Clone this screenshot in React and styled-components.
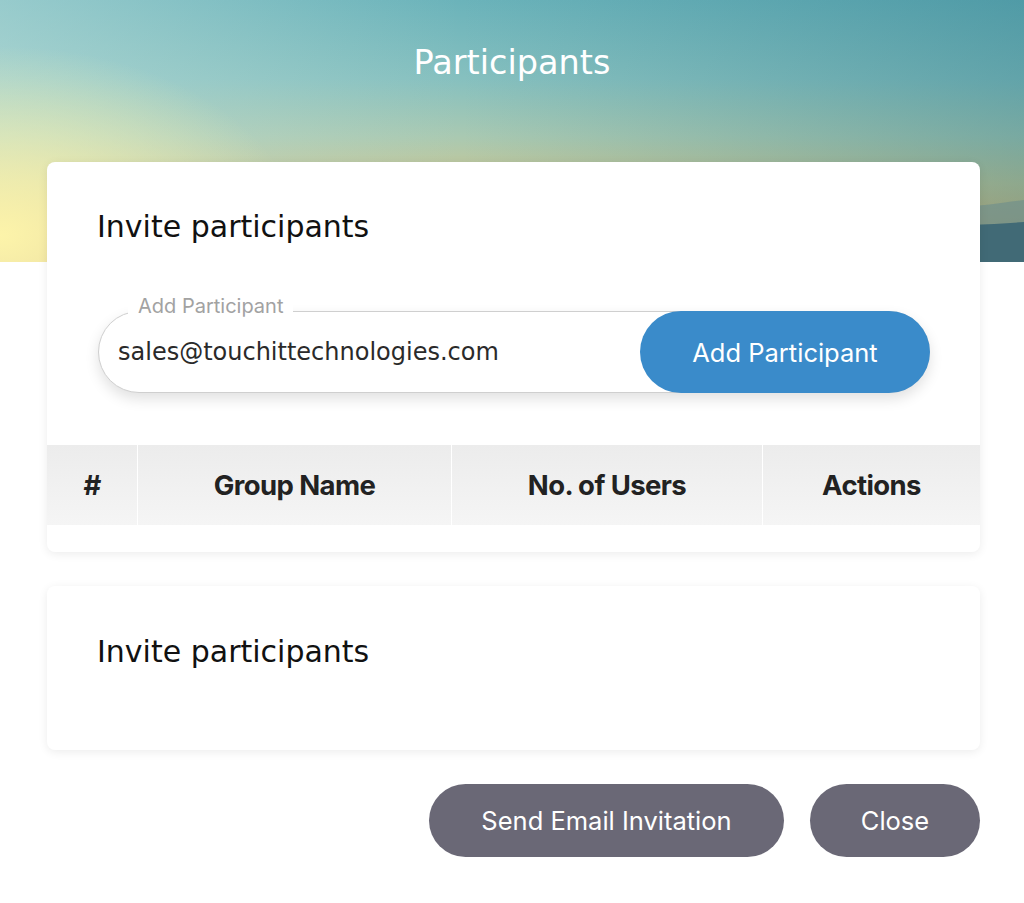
import React, { useEffect, useRef, useState } from 'react';
import styled, { createGlobalStyle } from 'styled-components';

const GlobalStyle = createGlobalStyle`
  html, body {
    margin: 0;
    padding: 0;
    background: #ffffff;
  }
  * {
    box-sizing: border-box;
  }
`;

const headingFont = `"DejaVu Sans", "Noto Sans", sans-serif`;
const uiFont = `Inter, Roboto, "Liberation Sans", sans-serif`;

const Page = styled.div`
  width: 1024px;
  min-height: 903px;
  background: #ffffff;
`;

const Hero = styled.header`
  position: relative;
  height: 262px;
  overflow: hidden;
  background:
    radial-gradient(ellipse 300px 190px at 0% 90%, rgba(255, 246, 170, 0.95), rgba(250, 230, 150, 0) 100%),
    linear-gradient(90deg, rgba(205, 232, 226, 0.45) 0%, rgba(255, 255, 255, 0) 45%, rgba(30, 110, 130, 0.35) 100%),
    linear-gradient(180deg, #6bb3ba 0%, #86c0bf 30%, #a9c9b2 52%, #cac793 70%, #dab573 88%, #d8a866 100%);
`;

const Mountains = styled.svg`
  position: absolute;
  right: 0;
  bottom: 0;
  width: 320px;
  height: 70px;
`;

const HeroTitle = styled.h1`
  position: relative;
  margin: 0;
  padding-top: 40px;
  text-align: center;
  font-family: ${headingFont};
  font-weight: 400;
  font-size: 33.5px;
  line-height: 46px;
  color: #ffffff;
`;

const Content = styled.main`
  position: relative;
  margin-top: -100px;
  padding: 0 44px 0 47px;
  display: flex;
  flex-direction: column;
  gap: 34px;
`;

const Card = styled.section`
  background: #ffffff;
  border-radius: 8px;
  box-shadow: 0 2px 10px rgba(0, 0, 0, 0.08);
  padding-bottom: ${p => p.$pb || 0}px;
  overflow: hidden;
`;

const CardTitle = styled.h2`
  margin: 0;
  padding: ${p => p.$pt}px 50px 0;
  font-family: ${headingFont};
  font-weight: 400;
  font-size: 30px;
  line-height: 40px;
  color: #111111;
`;

const FieldRow = styled.div`
  margin: 64px 50px 52px 51px;
  position: relative;
  display: flex;
  height: 82px;
  border-radius: 41px;
  border: 1px solid #cfcfcf;
  box-shadow: 0 6px 14px rgba(0, 0, 0, 0.12);
  background: #ffffff;
`;

const FieldLabel = styled.span`
  position: absolute;
  top: -18px;
  left: 29px;
  padding: 0 10px;
  background: #ffffff;
  font-family: ${uiFont};
  font-size: 20px;
  line-height: 24px;
  color: #a2a2a2;
`;

const EmailInput = styled.input`
  flex: 1;
  min-width: 0;
  border: none;
  outline: none;
  background: transparent;
  padding: 0 0 0 19px;
  font-family: ${headingFont};
  font-size: 24px;
  color: #2a2a2a;
  caret-color: #222;
`;

const AddButton = styled.button`
  width: 290px;
  margin: -1px -1px -1px 0;
  border: none;
  border-radius: 41px;
  background: #3a8bca;
  color: #ffffff;
  font-family: ${uiFont};
  font-size: 25.5px;
  cursor: pointer;
`;

const Table = styled.div`
  display: grid;
  grid-template-columns: 90px 313px 310px 1fr;
  column-gap: 1px;
  background: #ffffff;
  margin-bottom: 27px;
`;

const HeadCell = styled.div`
  height: 80px;
  display: flex;
  align-items: center;
  justify-content: center;
  background: linear-gradient(180deg, #ececec 0%, #f5f5f5 100%);
  font-family: ${uiFont};
  font-weight: 700;
  font-size: 27.5px;
  letter-spacing: -0.6px;
  color: #222222;
`;

const Footer = styled.div`
  display: flex;
  justify-content: flex-end;
  gap: 26px;
`;

const PillButton = styled.button`
  height: 73px;
  width: ${p => p.$w}px;
  border: none;
  border-radius: 37px;
  background: #6a6876;
  color: #ffffff;
  font-family: ${uiFont};
  font-size: 25.5px;
  cursor: pointer;
`;

const columns = ['#', 'Group Name', 'No. of Users', 'Actions'];

export default function App() {
  const [email, setEmail] = useState('sales@touchittechnologies.com');
  const inputRef = useRef(null);

  useEffect(() => {
    const el = inputRef.current;
    if (el) {
      el.focus();
      el.setSelectionRange(el.value.length, el.value.length);
    }
  }, []);

  return (
    <Page>
      <GlobalStyle />
      <Hero>
        <Mountains viewBox="0 0 320 70" preserveAspectRatio="none">
          <path d="M0 30 C40 22 80 20 120 24 C160 18 200 10 240 14 C270 16 300 10 320 8 L320 70 L0 70 Z" fill="#6f8f8c" opacity="0.65" />
          <path d="M40 48 C90 42 150 40 200 36 C250 34 290 32 320 30 L320 70 L40 70 Z" fill="#416a76" />
        </Mountains>
        <HeroTitle>Participants</HeroTitle>
      </Hero>
      <Content>
        <Card>
          <CardTitle $pt={45}>Invite participants</CardTitle>
          <FieldRow>
            <FieldLabel>Add Participant</FieldLabel>
            <EmailInput ref={inputRef} value={email} onChange={e => setEmail(e.target.value)} />
            <AddButton>Add Participant</AddButton>
          </FieldRow>
          <Table>
            {columns.map(c => (
              <HeadCell key={c}>{c}</HeadCell>
            ))}
          </Table>
        </Card>
        <Card $pb={78}>
          <CardTitle $pt={46}>Invite participants</CardTitle>
        </Card>
        <Footer>
          <PillButton $w={355}>Send Email Invitation</PillButton>
          <PillButton $w={170}>Close</PillButton>
        </Footer>
      </Content>
    </Page>
  );
}
